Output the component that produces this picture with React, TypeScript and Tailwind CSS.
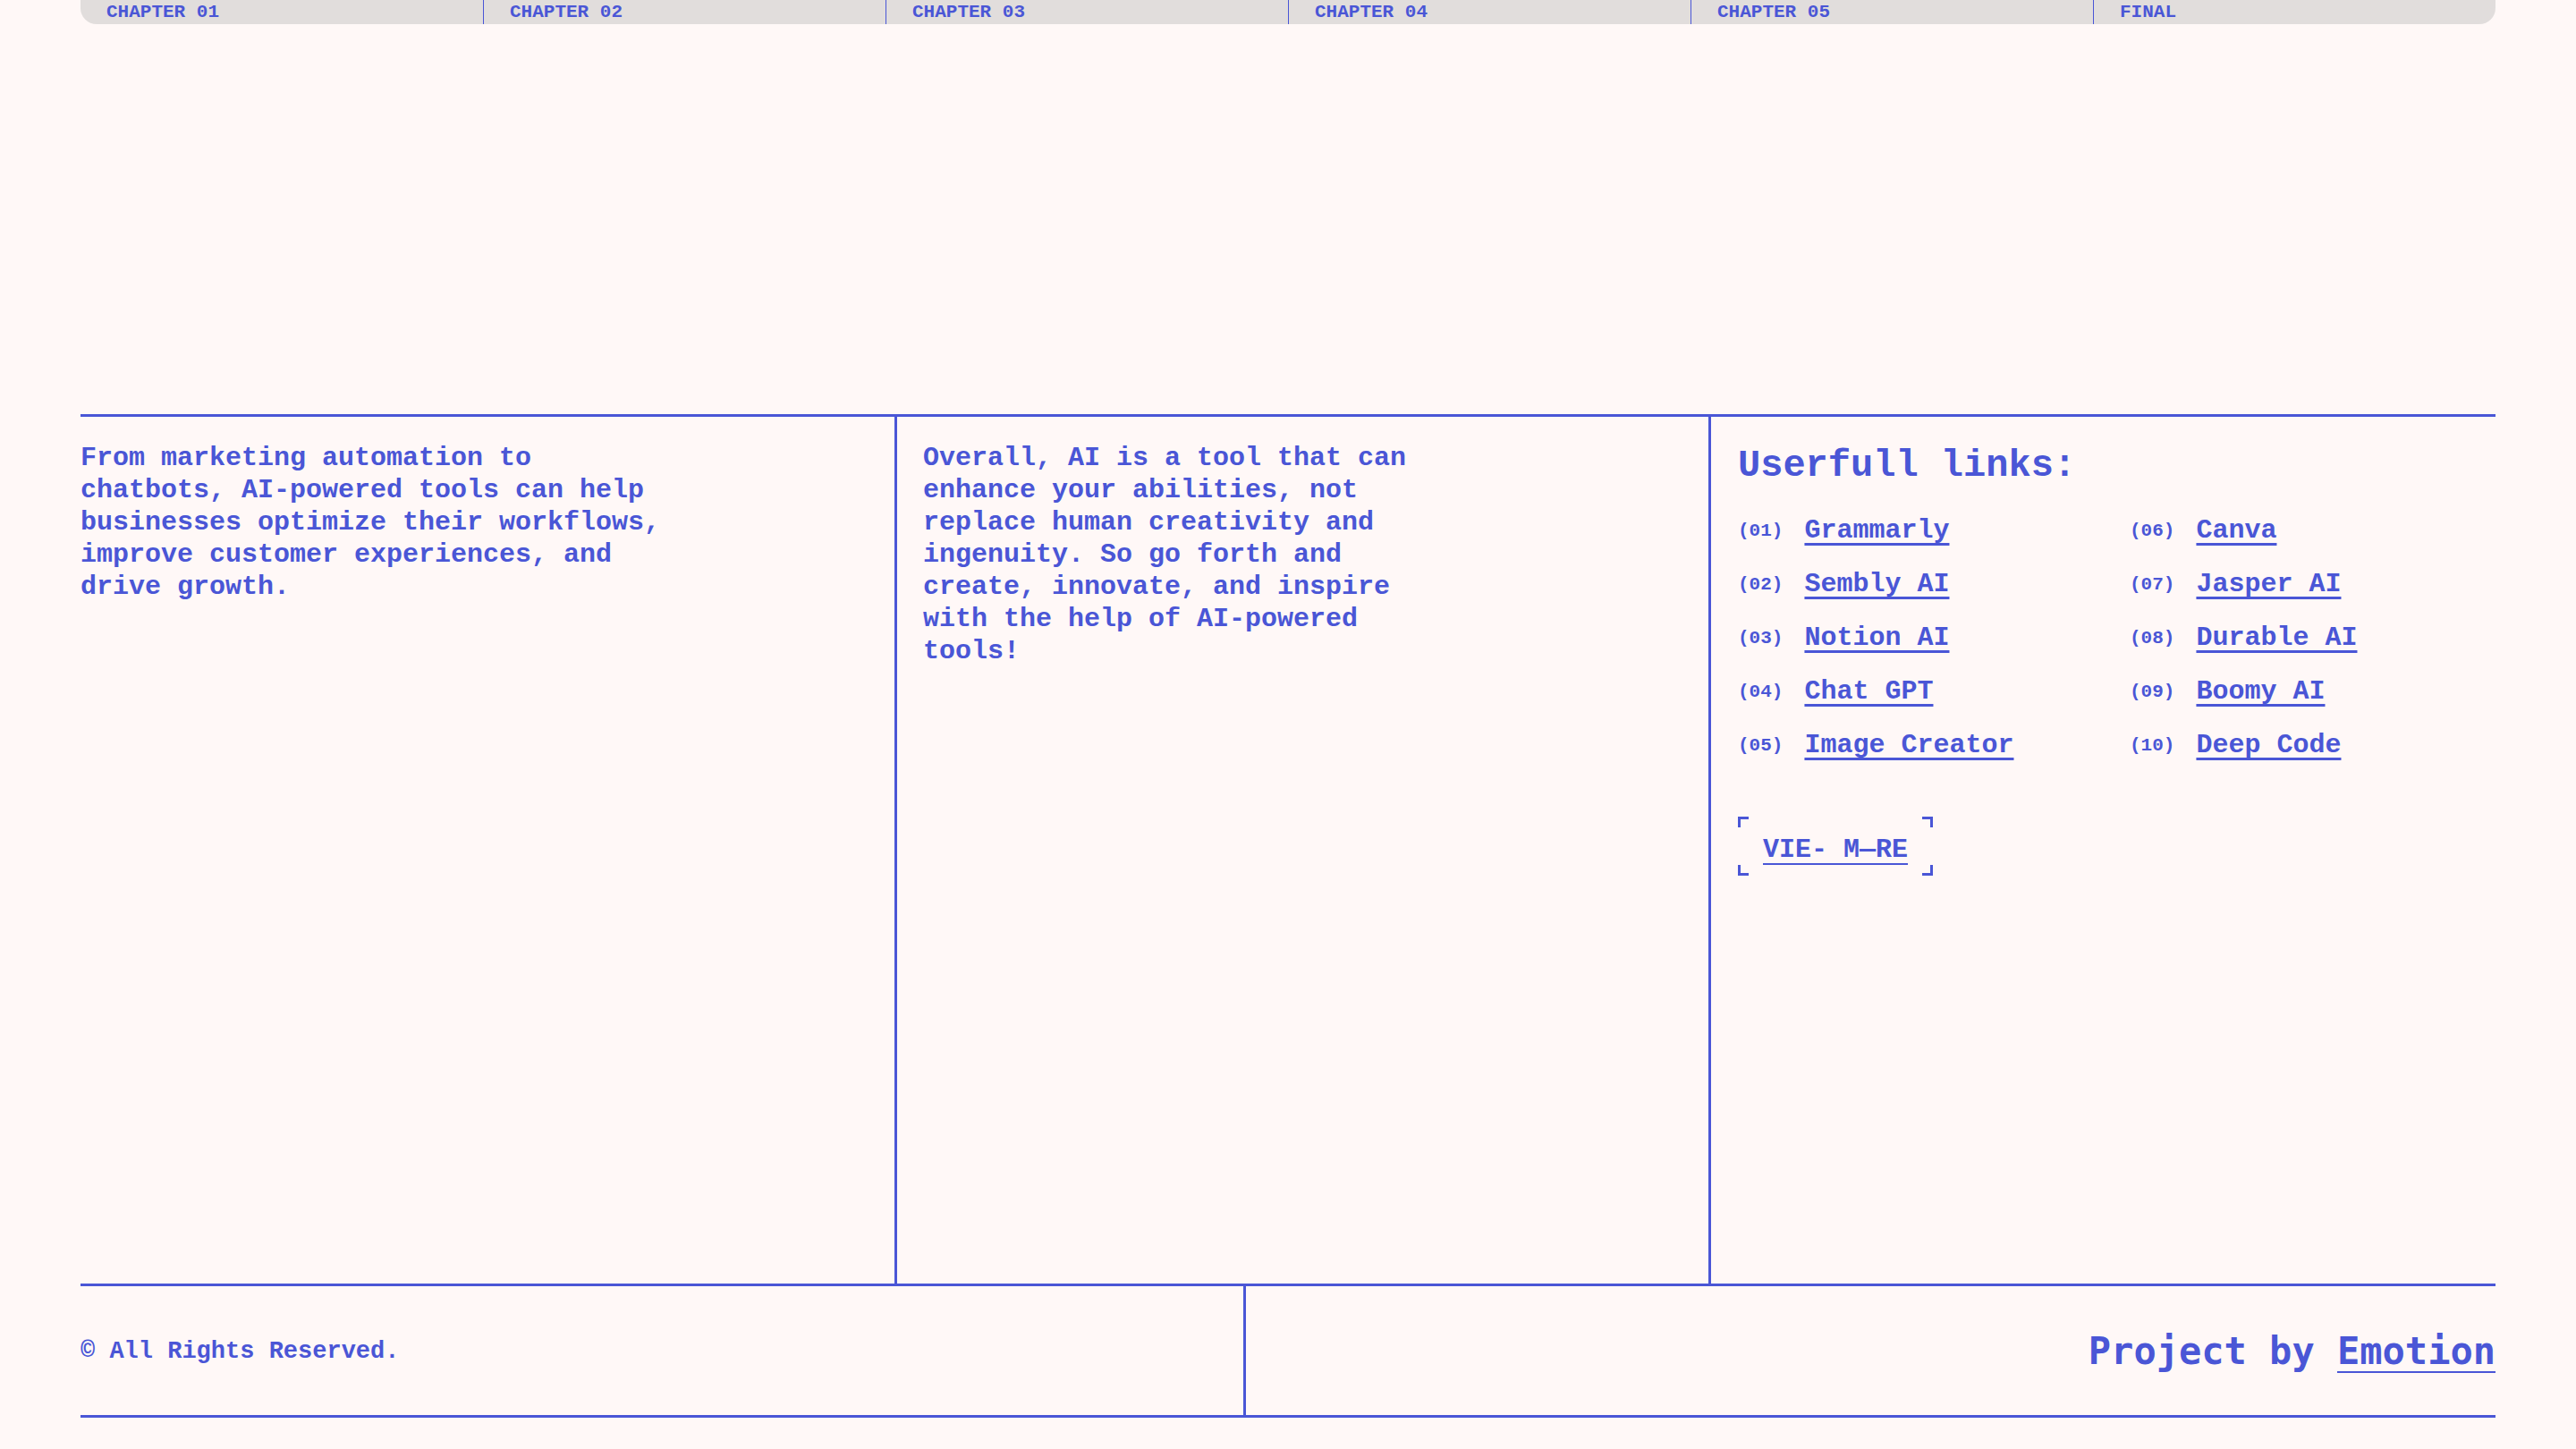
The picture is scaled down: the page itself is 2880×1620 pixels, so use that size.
import { ReactNode } from 'react';

const chapters = ['CHAPTER 01', 'CHAPTER 02', 'CHAPTER 03', 'CHAPTER 04', 'CHAPTER 05', 'FINAL'];

const links = [
  { no: '01', name: 'Grammarly' },
  { no: '06', name: 'Canva' },
  { no: '02', name: 'Sembly AI' },
  { no: '07', name: 'Jasper AI' },
  { no: '03', name: 'Notion AI' },
  { no: '08', name: 'Durable AI' },
  { no: '04', name: 'Chat GPT' },
  { no: '09', name: 'Boomy AI' },
  { no: '05', name: 'Image Creator' },
  { no: '10', name: 'Deep Code' },
];

const mono = "font-['Liberation_Mono','DejaVu_Sans_Mono',monospace]";

function Corner({ className }: { className: string }) {
  return <span className={`absolute w-[12px] h-[12px] border-[#4a56d6] ${className}`} />;
}

function BracketButton({ children }: { children: ReactNode }) {
  return (
    <a href="#" className="relative inline-flex items-center h-[66px] px-[28px]">
      <Corner className="top-0 left-0 border-t-[3px] border-l-[3px]" />
      <Corner className="top-0 right-0 border-t-[3px] border-r-[3px]" />
      <Corner className="bottom-0 left-0 border-b-[3px] border-l-[3px]" />
      <Corner className="bottom-0 right-0 border-b-[3px] border-r-[3px]" />
      <span className="pt-[8px] text-[30px] leading-[36px] font-bold underline decoration-2 underline-offset-[7px]">
        {children}
      </span>
    </a>
  );
}

export default function App() {
  return (
    <div className={`min-h-screen bg-[#fff8f7] text-[#4a56d6] px-[90px] ${mono}`}>
      {/* Chapter nav */}
      <nav className="flex h-[27px] bg-[#e1dddc] rounded-b-[18px] overflow-hidden">
        {chapters.map((c, i) => (
          <div
            key={c}
            className={`w-[450px] flex items-center pl-[29px] text-[21px] font-bold leading-none ${i > 0 ? 'border-l border-[#4a56d6]' : ''}`}
          >
            {c}
          </div>
        ))}
      </nav>

      {/* Content columns */}
      <section className="mt-[436px] h-[975px] flex border-t-[3px] border-b-[3px] border-[#4a56d6]">
        <div className="w-[913px] border-r-[3px] border-[#4a56d6] pt-[28px]">
          <p className="max-w-[660px] text-[30px] leading-[36px] font-bold">
            From marketing automation to chatbots, AI-powered tools can help businesses optimize their
            workflows, improve customer experiences, and drive growth.
          </p>
        </div>
        <div className="w-[910px] border-r-[3px] border-[#4a56d6] pt-[28px] pl-[29px]">
          <p className="max-w-[560px] text-[30px] leading-[36px] font-bold">
            Overall, AI is a tool that can enhance your abilities, not replace human creativity and
            ingenuity. So go forth and create, innovate, and inspire with the help of AI-powered tools!
          </p>
        </div>
        <div className="flex-1 pt-[30px] pl-[30px]">
          <h3 className="text-[42px] leading-[50px] font-bold">Userfull links:</h3>
          <ul className="mt-[29px] grid grid-cols-[408px_1fr] gap-x-[30px] gap-y-[24px]">
            {links.map((l) => (
              <li key={l.no} className="flex items-center gap-[24px] h-[36px]">
                <span className="text-[21px] leading-none font-bold">({l.no})</span>
                <a
                  href="#"
                  className="text-[30px] leading-[36px] font-bold underline decoration-[3px] underline-offset-[6px]"
                >
                  {l.name}
                </a>
              </li>
            ))}
          </ul>
          <div className="mt-[62px]">
            <BracketButton>VIE- M—RE</BracketButton>
          </div>
        </div>
      </section>

      {/* Footer */}
      <footer className="h-[147px] flex border-b-[3px] border-[#4a56d6]">
        <div className="w-[1303px] border-r-[3px] border-[#4a56d6] flex items-center">
          <span className="text-[27px] font-bold pt-[2px]">© All Rights Reserved.</span>
        </div>
        <div className="flex-1 flex items-center justify-end">
          <span className="font-['DejaVu_Sans_Mono',monospace] text-[42px] font-bold">
            Project by{' '}
            <a href="#" className="underline decoration-2 underline-offset-[8px]">
              Emotion
            </a>
          </span>
        </div>
      </footer>
    </div>
  );
}
